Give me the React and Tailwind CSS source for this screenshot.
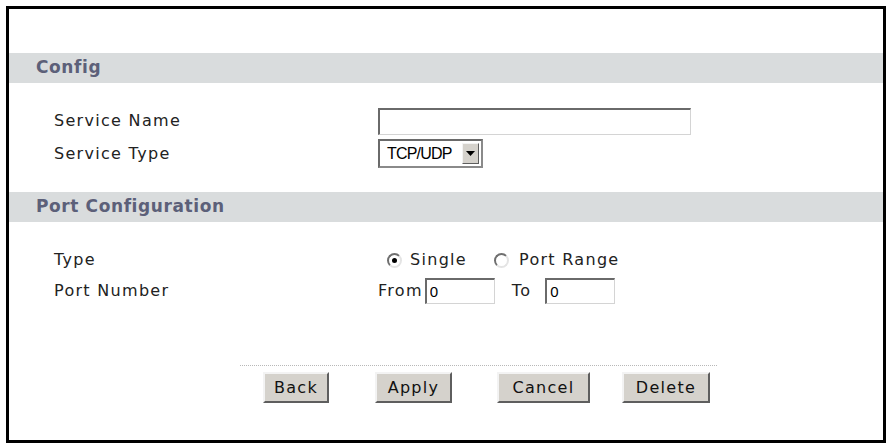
import React, { useState } from 'react';

const SectionBar = ({ title }) => (
    <div className="h-[30px] bg-[#d9dcdd] flex items-center pl-[27px] text-[17px] font-bold tracking-[0.6px] text-[#5c6079]">
        {title}
    </div>
);

const Radio = ({ checked, onClick }) => (
    <span
        onClick={onClick}
        className="w-[15px] h-[15px] rounded-full bg-white border-2 border-t-[#6f6f6f] border-l-[#6f6f6f] border-r-[#e4e4e4] border-b-[#e4e4e4] flex items-center justify-center cursor-pointer"
    >
        {checked && <span className="w-[5px] h-[5px] rounded-full bg-black" />}
    </span>
);

const Button = ({ children, width }) => (
    <button
        className="h-[31px] bg-[#d5d2cc] border-2 border-t-[#f3f3f3] border-l-[#f3f3f3] border-r-[#5e5e5e] border-b-[#5e5e5e] text-[16px] tracking-[1.3px] text-[#111] flex items-center justify-center"
        style={{ width }}
    >
        {children}
    </button>
);

const App = () => {
    const [portType, setPortType] = useState('single');

    return (
        <div className="w-[890px] h-[448px] bg-white pt-[6px] pl-[6px] font-['DejaVu_Sans',Verdana,sans-serif]">
            <div className="w-[880px] h-[437px] border-[3px] border-black flex flex-col">
                <div className="h-[44px] shrink-0" />
                <SectionBar title="Config" />

                {/* Config rows */}
                <div className="mt-[24px] h-[28px] flex items-center text-[16px] tracking-[1.3px] text-[#222]">
                    <div className="w-[369px] pl-[45px]">Service Name</div>
                    <input
                        type="text"
                        className="w-[313px] h-[27px] bg-white border-t-2 border-l-2 border-r border-b border-t-[#6a6a6a] border-l-[#6a6a6a] border-r-[#d4d4d4] border-b-[#d4d4d4] outline-none"
                    />
                </div>
                <div className="mt-[4px] h-[29px] flex items-center text-[16px] tracking-[1.3px] text-[#222]">
                    <div className="w-[369px] pl-[45px]">Service Type</div>
                    <div className="w-[105px] h-[29px] border-2 border-t-[#6a6a6a] border-l-[#6a6a6a] border-r-[#8a8a8a] border-b-[#8a8a8a] bg-white flex items-center">
                        <span className="flex-1 pl-[7px] font-['Liberation_Sans',Arial,sans-serif] text-[16px] tracking-[-0.8px] text-black">TCP/UDP</span>
                        <span className="w-[17px] h-[21px] mr-[2px] bg-[#d5d2cc] border border-t-[#f3f3f3] border-l-[#f3f3f3] border-r-[#5e5e5e] border-b-[#5e5e5e] flex items-center justify-center">
                            <svg width="9" height="5" viewBox="0 0 9 5">
                                <path d="M0 0 H9 L4.5 5 Z" fill="#000" />
                            </svg>
                        </span>
                    </div>
                </div>

                <div className="mt-[24px]">
                    <SectionBar title="Port Configuration" />
                </div>

                {/* Port rows */}
                <div className="mt-[25px] h-[26px] flex items-center text-[16px] tracking-[1.3px] text-[#222]">
                    <div className="w-[369px] pl-[45px]">Type</div>
                    <div className="flex items-center pl-[9px]">
                        <Radio checked={portType === 'single'} onClick={() => setPortType('single')} />
                        <span className="ml-[8px]">Single</span>
                        <span className="ml-[27px]">
                            <Radio checked={portType === 'range'} onClick={() => setPortType('range')} />
                        </span>
                        <span className="ml-[10px]">Port Range</span>
                    </div>
                </div>
                <div className="mt-[5px] h-[26px] flex items-center text-[16px] tracking-[1.3px] text-[#222]">
                    <div className="w-[369px] pl-[45px]">Port Number</div>
                    <span>From</span>
                    <input
                        type="text"
                        defaultValue="0"
                        className="ml-[2px] w-[70px] h-[26px] pl-[3px] bg-white border-t-2 border-l-2 border-r border-b border-t-[#6a6a6a] border-l-[#6a6a6a] border-r-[#d4d4d4] border-b-[#d4d4d4] outline-none font-['Liberation_Sans',Arial,sans-serif] text-[15px] tracking-normal text-black"
                    />
                    <span className="ml-[17px]">To</span>
                    <input
                        type="text"
                        defaultValue="0"
                        className="ml-[14px] w-[70px] h-[26px] pl-[3px] bg-white border-t-2 border-l-2 border-r border-b border-t-[#6a6a6a] border-l-[#6a6a6a] border-r-[#d4d4d4] border-b-[#d4d4d4] outline-none font-['Liberation_Sans',Arial,sans-serif] text-[15px] tracking-normal text-black"
                    />
                </div>

                {/* Buttons */}
                <div className="mt-[61px] ml-[231px] w-[477px] border-t border-dotted border-[#b8b8b8]" />
                <div className="mt-[6px] flex items-center pl-[254px]">
                    <Button width={66}>Back</Button>
                    <div className="ml-[46px]"><Button width={77}>Apply</Button></div>
                    <div className="ml-[45px]"><Button width={93}>Cancel</Button></div>
                    <div className="ml-[32px]"><Button width={88}>Delete</Button></div>
                </div>
            </div>
        </div>
    );
};

export default App;
